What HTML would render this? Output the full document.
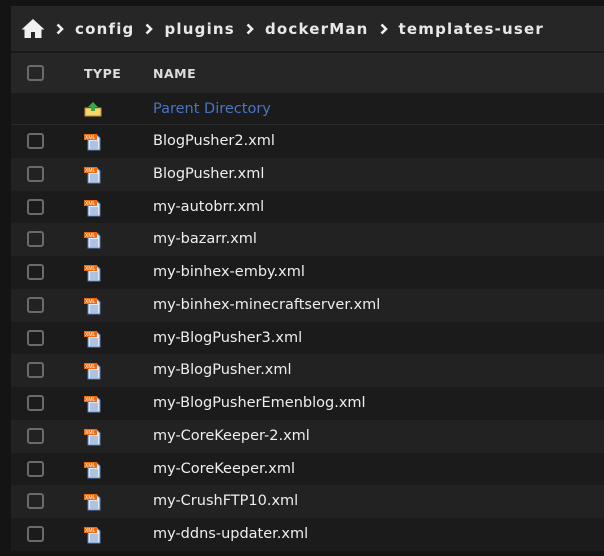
<!DOCTYPE html>
<html><head><style>
*{margin:0;padding:0;box-sizing:border-box}
body{width:604px;height:556px;background:#141414;font-family:"DejaVu Sans","Liberation Sans",sans-serif;overflow:hidden;position:relative}
.panel{position:absolute;left:11px;top:6px;width:593px}
.bc{height:45px;background:#262626;color:#e8e8e8;font-size:15px;letter-spacing:1.2px;display:flex;align-items:center;padding-left:10px;font-weight:bold}
.bc svg.c{margin:0 11px 0 11px}
.gap{height:2px;background:#1a1a1a}
.hdr{height:40px;background:#262626;color:#ddd;font-size:12.5px;font-weight:bold;letter-spacing:.5px;position:relative}
.row{height:32.77px;position:relative;color:#eee;font-size:14.5px}
.row.a{background:#1b1b1b}.row.b{background:#222}
.cb{position:absolute;left:16px;top:8px;width:17px;height:16px;border:2px solid #6a6a6a;border-radius:3px}
.hdr .cb{top:12px}
.nm{position:absolute;left:142px;top:8px}
.ic{position:absolute;left:73px;top:8px}
</style></head><body>
<div class="panel">
<div class="bc"><svg width="24" height="21" viewBox="0 0 24 21"><path d="M12 1 L0.5 11.5 L3.5 11.5 L3.5 20 L10 20 L10 14 L14 14 L14 20 L20.5 20 L20.5 11.5 L23.5 11.5 Z" fill="#f0f0f0"/></svg>
<svg class="c" width="8" height="12" viewBox="0 0 8 12"><path d="M1.5 1.5 L6 6 L1.5 10.5" fill="none" stroke="#eee" stroke-width="2.6"/></svg>config<svg class="c" width="8" height="12" viewBox="0 0 8 12"><path d="M1.5 1.5 L6 6 L1.5 10.5" fill="none" stroke="#eee" stroke-width="2.6"/></svg>plugins<svg class="c" width="8" height="12" viewBox="0 0 8 12"><path d="M1.5 1.5 L6 6 L1.5 10.5" fill="none" stroke="#eee" stroke-width="2.6"/></svg>dockerMan<svg class="c" width="8" height="12" viewBox="0 0 8 12"><path d="M1.5 1.5 L6 6 L1.5 10.5" fill="none" stroke="#eee" stroke-width="2.6"/></svg>templates-user</div>
<div class="gap"></div>
<div class="hdr"><div class="cb"></div><span style="position:absolute;left:73px;top:13px">TYPE</span><span style="position:absolute;left:142px;top:13px">NAME</span></div>
<div class="row a" style="border-bottom:1px solid #2c2c2c;height:32px"><svg class="ic" width="18" height="16" viewBox="0 0 18 16"><rect x="1" y="7" width="16" height="8" fill="#f5d76e" stroke="#b8962e"/><path d="M9 1 L14 6 L11 6 L11 10 L7 10 L7 6 L4 6Z" fill="#3aa84a"/></svg><span class="nm" style="color:#4a74c4">Parent Directory</span></div>
<div id="rows"></div>
</div>
<script>
var n=["BlogPusher2.xml","BlogPusher.xml","my-autobrr.xml","my-bazarr.xml","my-binhex-emby.xml","my-binhex-minecraftserver.xml","my-BlogPusher3.xml","my-BlogPusher.xml","my-BlogPusherEmenblog.xml","my-CoreKeeper-2.xml","my-CoreKeeper.xml","my-CrushFTP10.xml","my-ddns-updater.xml"];
var h="";n.forEach(function(s,i){h+='<div class="row '+(i%2?'b':'a')+'"><div class="cb"></div><svg class="ic" width="18" height="18" viewBox="0 0 18 18"><path d="M4 2 L13 2 L16 5 L16 17 L4 17Z" fill="#dfe8f5" stroke="#5a7fb8"/><path d="M6 9h8M6 11h8M6 13h8M6 15h8" stroke="#7f9ccc"/><rect x="0" y="1" width="13" height="6" fill="#f06a10"/><text x="1" y="6" font-size="5" fill="#fff" font-family="Liberation Sans">XML</text></svg><span class="nm">'+s+'</span></div>'});
document.getElementById("rows").innerHTML=h;
</script>
</body></html>
